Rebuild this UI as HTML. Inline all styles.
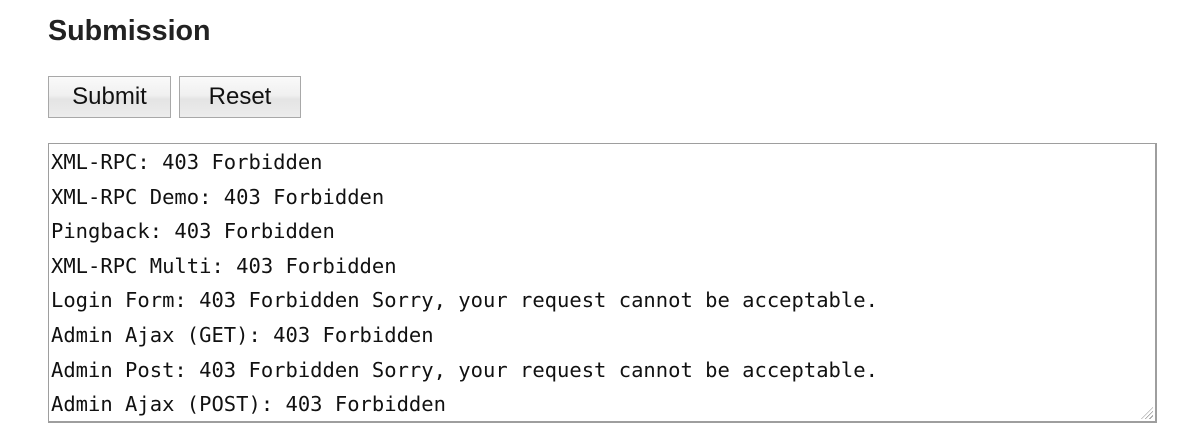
<!DOCTYPE html>
<html><head><meta charset="utf-8"><style>
html,body{margin:0;padding:0;background:#fff;width:1200px;height:440px;overflow:hidden}
h2{position:absolute;left:48px;top:12px;margin:0;font:bold 28.7px "Liberation Sans",sans-serif;color:#222;line-height:38px}
.btn{position:absolute;top:76px;height:42px;box-sizing:border-box;border:1px solid #a8a8a8;background:linear-gradient(#fafafa,#f0f0f0 45%,#e4e4e4 55%,#ececec);font:24px "Liberation Sans",sans-serif;color:#111;text-align:center;line-height:40px}
.ta{position:absolute;left:48px;top:143px;width:1109px;height:280px;box-sizing:border-box;border:2px solid #9e9e9e;border-width:1px 2px 2px 1px;padding:1px 2px;font:20.5px "DejaVu Sans Mono","Liberation Mono",monospace;line-height:34.6px;color:#111;white-space:pre}
.grip{position:absolute;right:2px;bottom:2px;width:12px;height:12px;background:repeating-linear-gradient(135deg,transparent 0 2px,#999 2px 3px);clip-path:polygon(100% 0,100% 100%,0 100%)}
</style></head><body>
<h2>Submission</h2>
<div class="btn" style="left:48px;width:123px">Submit</div>
<div class="btn" style="left:179px;width:122px">Reset</div>
<div class="ta">XML-RPC: 403 Forbidden
XML-RPC Demo: 403 Forbidden
Pingback: 403 Forbidden
XML-RPC Multi: 403 Forbidden
Login Form: 403 Forbidden Sorry, your request cannot be acceptable.
Admin Ajax (GET): 403 Forbidden
Admin Post: 403 Forbidden Sorry, your request cannot be acceptable.
Admin Ajax (POST): 403 Forbidden<div class="grip"></div></div>
</body></html>
